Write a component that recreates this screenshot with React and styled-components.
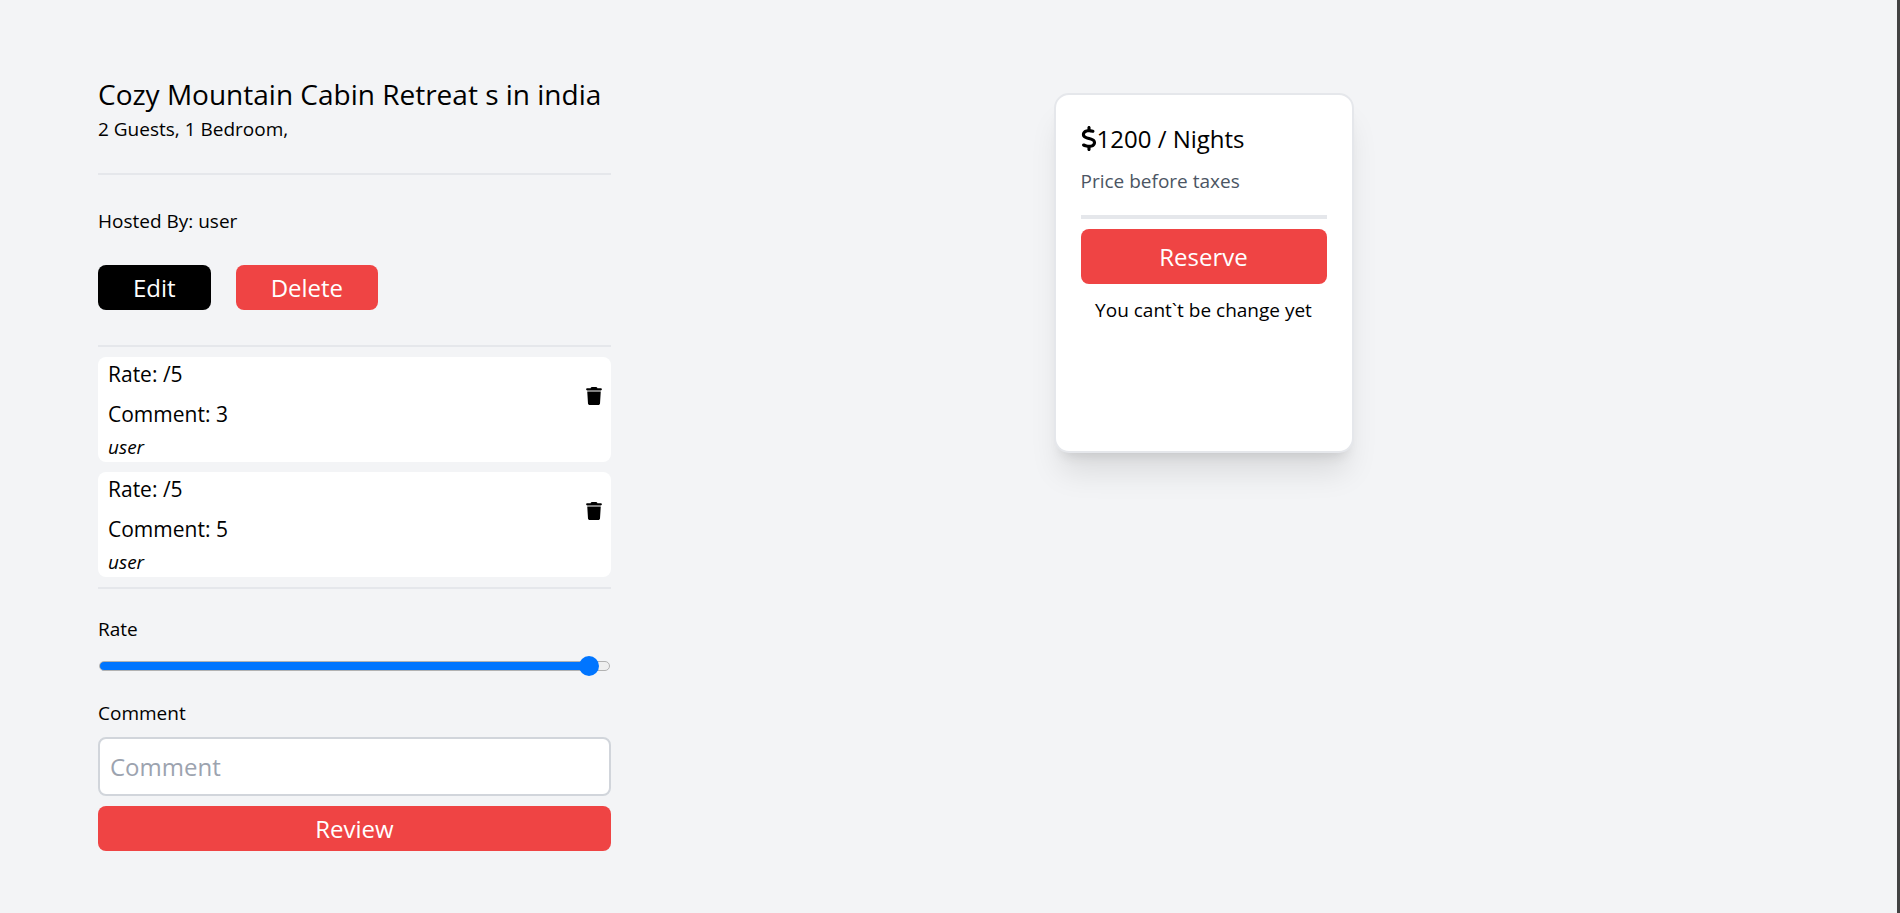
import React, { useState } from "react";
import styled, { createGlobalStyle } from "styled-components";
import { FaTrash, FaDollarSign } from "react-icons/fa6";

const GlobalStyle = createGlobalStyle`
  *, *::before, *::after { box-sizing: border-box; }
  body {
    margin: 0;
    background: #f3f4f6;
    color: #000;
    font-family: "Segoe UI", "Open Sans", "Noto Sans", sans-serif;
    font-size: 19px;
    line-height: 30px;
  }
  h1, h2, p { margin: 0; font-weight: 400; }
  ul { margin: 0; padding: 0; list-style: none; }
  button, input { font: inherit; }
`;

/* The dark strip on the right edge is a slim scroll track with its thumb. */
const Page = styled.main`
  min-height: 100vh;
  display: grid;
  grid-template-columns: 513px 1fr;
  align-items: start;
  padding: 74px 104px 50px 98px;
  background:
    linear-gradient(#6b6b6b, #6b6b6b) 100% 73% / 1px 46% no-repeat,
    linear-gradient(#424242, #424242) 100% 0 / 3px 100% no-repeat,
    #f3f4f6;
`;

const Details = styled.div`
  display: flex;
  flex-direction: column;
`;

const Title = styled.h1`
  font-size: 28px;
  line-height: 40px;
  white-space: nowrap;
`;

const Section = styled.section`
  padding: ${(p) => p.$padding};
  border-bottom: ${(p) => (p.$last ? "none" : "2px solid #e5e7eb")};
`;

const Actions = styled.div`
  display: flex;
  gap: 25px;
  margin-top: 29px;
`;

const Button = styled.button`
  width: ${(p) => (p.$block ? "100%" : "auto")};
  height: ${(p) => (p.$tall ? "55px" : "45px")};
  padding: 0 35px;
  border: 0;
  border-radius: 8px;
  background: ${(p) => (p.$dark ? "#000" : "#ef4444")};
  color: #fff;
  font-size: 24px;
  line-height: 35px;
  cursor: pointer;
`;

const Reviews = styled.ul`
  display: grid;
  gap: 10px;
`;

const Review = styled.li`
  display: flex;
  justify-content: space-between;
  align-items: flex-start;
  padding: 0 9px 0 10px;
  border-radius: 8px;
  background: #fff;
`;

const ReviewLine = styled.p`
  font-size: 21px;
  line-height: 35px;
  & + & { margin-top: 5px; }
`;

const Author = styled.p`
  font-style: italic;
`;

const IconButton = styled.button`
  display: flex;
  margin-top: 30px;
  padding: 0;
  border: 0;
  background: none;
  color: #000;
  font-size: 18px;
  cursor: pointer;
  svg { width: 16px; }
`;

const Form = styled.form`
  display: flex;
  flex-direction: column;
`;

const Label = styled.label`
  display: block;
`;

const Slider = styled.input`
  appearance: none;
  width: calc(100% - 2px);
  height: 20px;
  margin: 12px 1px 22px;
  background: none;
  &::-webkit-slider-runnable-track {
    height: 10px;
    border: 1px solid #b2b2b2;
    border-radius: 5px;
    background: linear-gradient(#0075ff, #0075ff) border-box 0 0 / var(--fill) 100% no-repeat, #efefef;
  }
  &::-webkit-slider-thumb {
    appearance: none;
    width: 20px;
    height: 20px;
    margin-top: -6px;
    border-radius: 50%;
    background: #0075ff;
  }
`;

const TextField = styled.input`
  width: 100%;
  height: 59px;
  margin: 9px 0 10px;
  padding: 0 10px;
  border: 2px solid #d1d5db;
  border-radius: 8px;
  background: #fff;
  font-size: 24px;
  &::placeholder { color: #9ca3af; opacity: 1; }
`;

const PriceCard = styled.aside`
  justify-self: center;
  width: 300px;
  min-height: 360px;
  margin-top: 19px;
  padding: 26px 25px 25px;
  border: 2px solid #e5e7eb;
  border-radius: 15px;
  background: #fff;
  box-shadow: 0 25px 31px -6px rgba(0, 0, 0, 0.1), 0 10px 12px -7px rgba(0, 0, 0, 0.1);
`;

const Price = styled.h2`
  display: flex;
  align-items: center;
  font-size: 24px;
  line-height: 35px;
  svg { width: 16px; height: 25px; }
`;

const TaxNote = styled.p`
  margin-top: 10px;
  padding-bottom: 19px;
  margin-bottom: 10px;
  border-bottom: 4px solid #e5e7eb;
  color: #4b5563;
`;

const Note = styled.p`
  margin-top: 11px;
  text-align: center;
  white-space: nowrap;
`;

const reviews = [
  { id: 1, comment: "3", author: "user" },
  { id: 2, comment: "5", author: "user" },
];

export default function App() {
  const [rate, setRate] = useState(4.9);
  return (
    <>
      <GlobalStyle />
      <Page>
        <Details>
          <Section $padding="0 0 29px">
            <Title>Cozy Mountain Cabin Retreat s in india</Title>
            <p>2 Guests, 1 Bedroom,</p>
          </Section>
          <Section $padding="31px 0 35px">
            <p>Hosted By: user</p>
            <Actions>
              <Button type="button" $dark>Edit</Button>
              <Button type="button">Delete</Button>
            </Actions>
          </Section>
          <Section $padding="10px 0">
            <Reviews>
              {reviews.map((r) => (
                <Review key={r.id}>
                  <div>
                    <ReviewLine>Rate: /5</ReviewLine>
                    <ReviewLine>Comment: {r.comment}</ReviewLine>
                    <Author>{r.author}</Author>
                  </div>
                  <IconButton type="button" aria-label="Delete review">
                    <FaTrash />
                  </IconButton>
                </Review>
              ))}
            </Reviews>
          </Section>
          <Section $padding="25px 0 0" $last>
            <Form onSubmit={(e) => e.preventDefault()}>
              <Label htmlFor="rate">Rate</Label>
              <Slider
                id="rate"
                type="range"
                min="0"
                max="5"
                step="0.1"
                value={rate}
                onChange={(e) => setRate(Number(e.target.value))}
                style={{ "--fill": `${(rate / 5) * 100 - 2}%` }}
              />
              <Label htmlFor="comment">Comment</Label>
              <TextField id="comment" type="text" placeholder="Comment" />
              <Button type="submit" $block>Review</Button>
            </Form>
          </Section>
        </Details>
        <PriceCard>
          <Price><FaDollarSign aria-hidden="true" />1200 / Nights</Price>
          <TaxNote>Price before taxes</TaxNote>
          <Button type="button" $block $tall>Reserve</Button>
          <Note>You cant`t be change yet</Note>
        </PriceCard>
      </Page>
    </>
  );
}
